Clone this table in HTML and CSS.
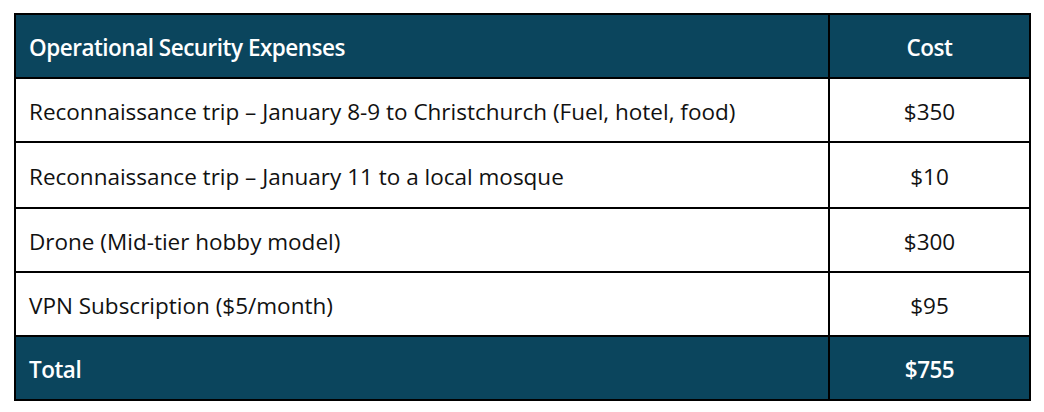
FILE: index.html
```html
<!DOCTYPE html>
<html>
<head>
<meta charset="utf-8">
<link rel="stylesheet" href="styles.css">
</head>
<body>
<div class="sheet">
  <div class="expenses">
    <div class="cell head label">Operational Security Expenses</div>
    <div class="cell head cost">Cost</div>
    <div class="cell label">Reconnaissance trip – January 8-9 to Christchurch (Fuel, hotel, food)</div>
    <div class="cell cost">$350</div>
    <div class="cell label">Reconnaissance trip – January 11 to a local mosque</div>
    <div class="cell cost">$10</div>
    <div class="cell label">Drone (Mid-tier hobby model)</div>
    <div class="cell cost">$300</div>
    <div class="cell label">VPN Subscription ($5/month)</div>
    <div class="cell cost">$95</div>
    <div class="cell total label">Total</div>
    <div class="cell total cost">$755</div>
  </div>
</div>
</body>
</html>
```
FILE: styles.css
```css
html, body {
  margin: 0;
  padding: 0;
  background: #ffffff;
}
.sheet {
  padding: 13px 0 0 14px;
}
.expenses {
  width: 1017px;
  box-sizing: border-box;
  border: 2px solid #000;
  display: grid;
  grid-template-columns: 814px 199px;
  grid-template-rows: 64px 64px 66px 64px 64px 62px;
  font-family: "Open Sans", "Liberation Sans", sans-serif;
  font-size: 22.5px;
  color: #111;
}
.cell {
  display: flex;
  align-items: center;
  border-bottom: 2px solid #000;
  box-sizing: border-box;
  padding-top: 2px;
}
.label {
  padding-left: 13px;
  border-right: 2px solid #000;
}
.cost {
  justify-content: center;
}
.head, .total {
  background: #0b455d;
  color: #fff;
  font-weight: 600;
  letter-spacing: -0.5px;
}
.total {
  border-bottom: none;
}
```
